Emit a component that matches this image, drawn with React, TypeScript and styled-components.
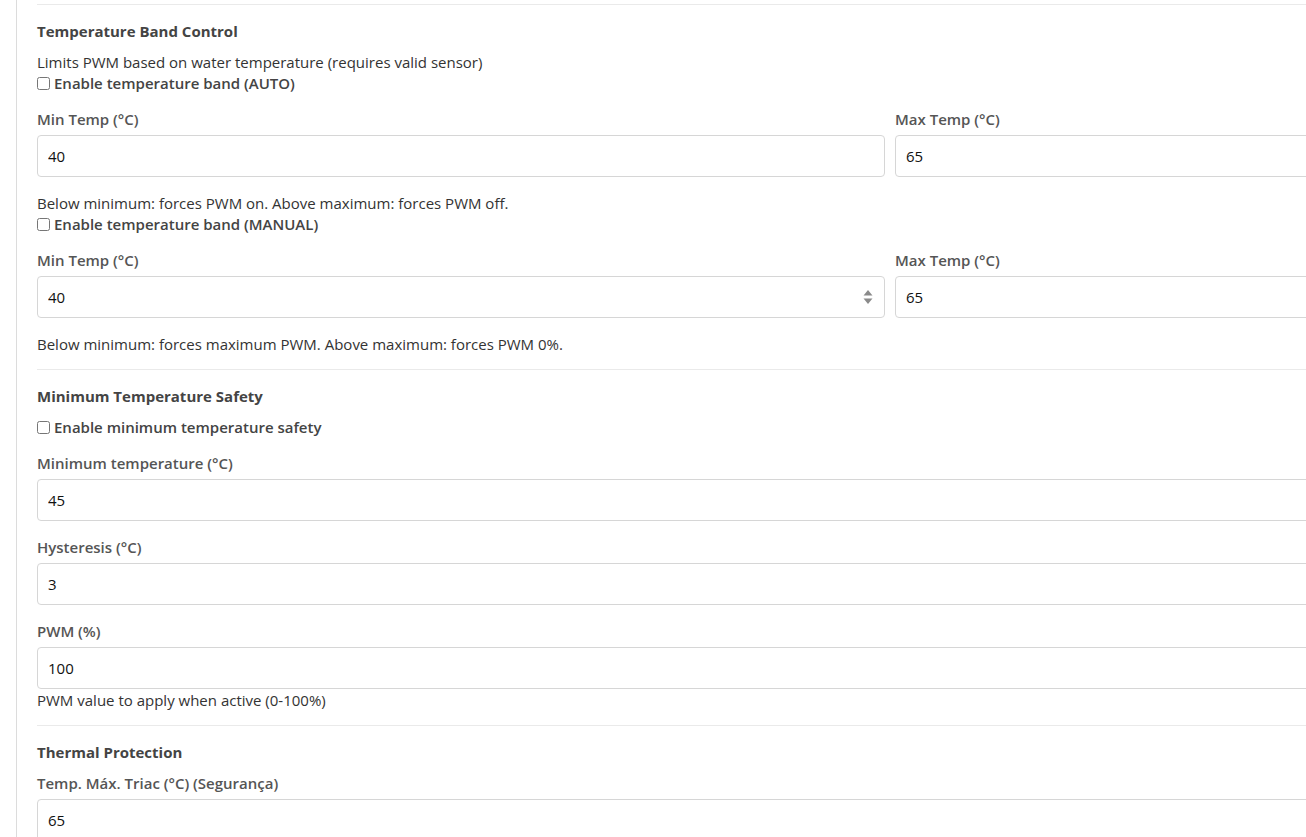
import React from "react";
import styled, { createGlobalStyle } from "styled-components";

const GlobalStyle = createGlobalStyle`
  html, body {
    margin: 0;
    padding: 0;
    background: #fff;
    overflow: hidden;
  }
  body {
    font-family: "Open Sans", "Liberation Sans", sans-serif;
    font-size: 15px;
    color: #333;
  }
`;

// Page frame with the grey rule on the left
const Page = styled.div`
  width: 1306px;
  height: 837px;
  overflow: hidden;
  padding-left: 16px;
  box-sizing: border-box;
`;

const Panel = styled.div`
  border-left: 1px solid #dcdcdc;
  padding: 4px 0 0 20px;
  height: 100%;
  box-sizing: border-box;
`;

const Content = styled.div`
  width: 1706px;
`;

const Rule = styled.hr<{ $top?: number; $bottom?: number }>`
  border: none;
  border-top: 1px solid #eaeaea;
  margin: ${(p) => `${p.$top ?? 0}px 0 ${p.$bottom ?? 0}px 0`};
`;

const Heading = styled.h4`
  margin: 0;
  font-size: 15px;
  font-weight: 700;
  color: #444;
  line-height: 21px;
`;

const Text = styled.p<{ $top?: number }>`
  margin: ${(p) => p.$top ?? 0}px 0 0 0;
  line-height: 21px;
  color: #333;
`;

const CheckRow = styled.label`
  display: flex;
  align-items: center;
  gap: 4px;
  font-weight: 600;
  color: #444;
  line-height: 21px;
  cursor: pointer;

  input {
    margin: 0;
    width: 13px;
    height: 13px;
  }
`;

const Row = styled.div`
  display: grid;
  grid-template-columns: 1fr 1fr;
  gap: 10px;
`;

const Group = styled.div`
  display: flex;
  flex-direction: column;
`;

const Label = styled.label`
  font-weight: 600;
  color: #555;
  line-height: 21px;
  margin-bottom: 5px;
`;

const FieldWrap = styled.div`
  position: relative;
`;

const Input = styled.input`
  box-sizing: border-box;
  width: 100%;
  height: 42px;
  padding: 0 10px;
  border: 1px solid #d6d6d6;
  border-radius: 4px;
  font-family: "Open Sans", "Liberation Sans", sans-serif;
  font-size: 15px;
  color: #111;
  background: #fff;
  outline: none;

  &::-webkit-inner-spin-button,
  &::-webkit-outer-spin-button {
    -webkit-appearance: none;
    margin: 0;
  }
`;

// hover spinner shown on one number field
const Spinner = styled.svg`
  position: absolute;
  right: 12px;
  top: 50%;
  transform: translateY(-50%);
`;

const Gap = styled.div<{ $h: number }>`
  height: ${(p) => p.$h}px;
`;

function Field({
  label,
  value,
  spin,
}: {
  label: string;
  value: string;
  spin?: boolean;
}) {
  return (
    <Group>
      <Label>{label}</Label>
      <FieldWrap>
        <Input type="number" defaultValue={value} />
        {spin && (
          <Spinner width="10" height="16" viewBox="0 0 10 16">
            <path d="M5 1 L9.5 6.5 L0.5 6.5 Z" fill="#8a8a8a" />
            <path d="M5 15 L9.5 9.5 L0.5 9.5 Z" fill="#8a8a8a" />
          </Spinner>
        )}
      </FieldWrap>
    </Group>
  );
}

export default function App() {
  return (
    <>
      <GlobalStyle />
      <Page>
        <Panel>
          <Content>
            <Rule $bottom={16} />
            <Heading>Temperature Band Control</Heading>
            <Gap $h={10} />
            <Text>Limits PWM based on water temperature (requires valid sensor)</Text>
            <CheckRow>
              <input type="checkbox" />
              Enable temperature band (AUTO)
            </CheckRow>
            <Gap $h={15} />
            <Row>
              <Field label="Min Temp (°C)" value="40" />
              <Field label="Max Temp (°C)" value="65" />
            </Row>
            <Gap $h={16} />
            <Text>Below minimum: forces PWM on. Above maximum: forces PWM off.</Text>
            <CheckRow>
              <input type="checkbox" />
              Enable temperature band (MANUAL)
            </CheckRow>
            <Gap $h={15} />
            <Row>
              <Field label="Min Temp (°C)" value="40" spin />
              <Field label="Max Temp (°C)" value="65" />
            </Row>
            <Gap $h={16} />
            <Text>Below minimum: forces maximum PWM. Above maximum: forces PWM 0%.</Text>
            <Rule $top={14} $bottom={16} />
            <Heading>Minimum Temperature Safety</Heading>
            <Gap $h={10} />
            <CheckRow>
              <input type="checkbox" />
              Enable minimum temperature safety
            </CheckRow>
            <Gap $h={15} />
            <Field label="Minimum temperature (°C)" value="45" />
            <Gap $h={16} />
            <Field label="Hysteresis (°C)" value="3" />
            <Gap $h={16} />
            <Field label="PWM (%)" value="100" />
            <Text $top={1}>PWM value to apply when active (0-100%)</Text>
            <Rule $top={14} $bottom={16} />
            <Heading>Thermal Protection</Heading>
            <Gap $h={10} />
            <Field label="Temp. Máx. Triac (°C) (Segurança)" value="65" />
          </Content>
        </Panel>
      </Page>
    </>
  );
}
